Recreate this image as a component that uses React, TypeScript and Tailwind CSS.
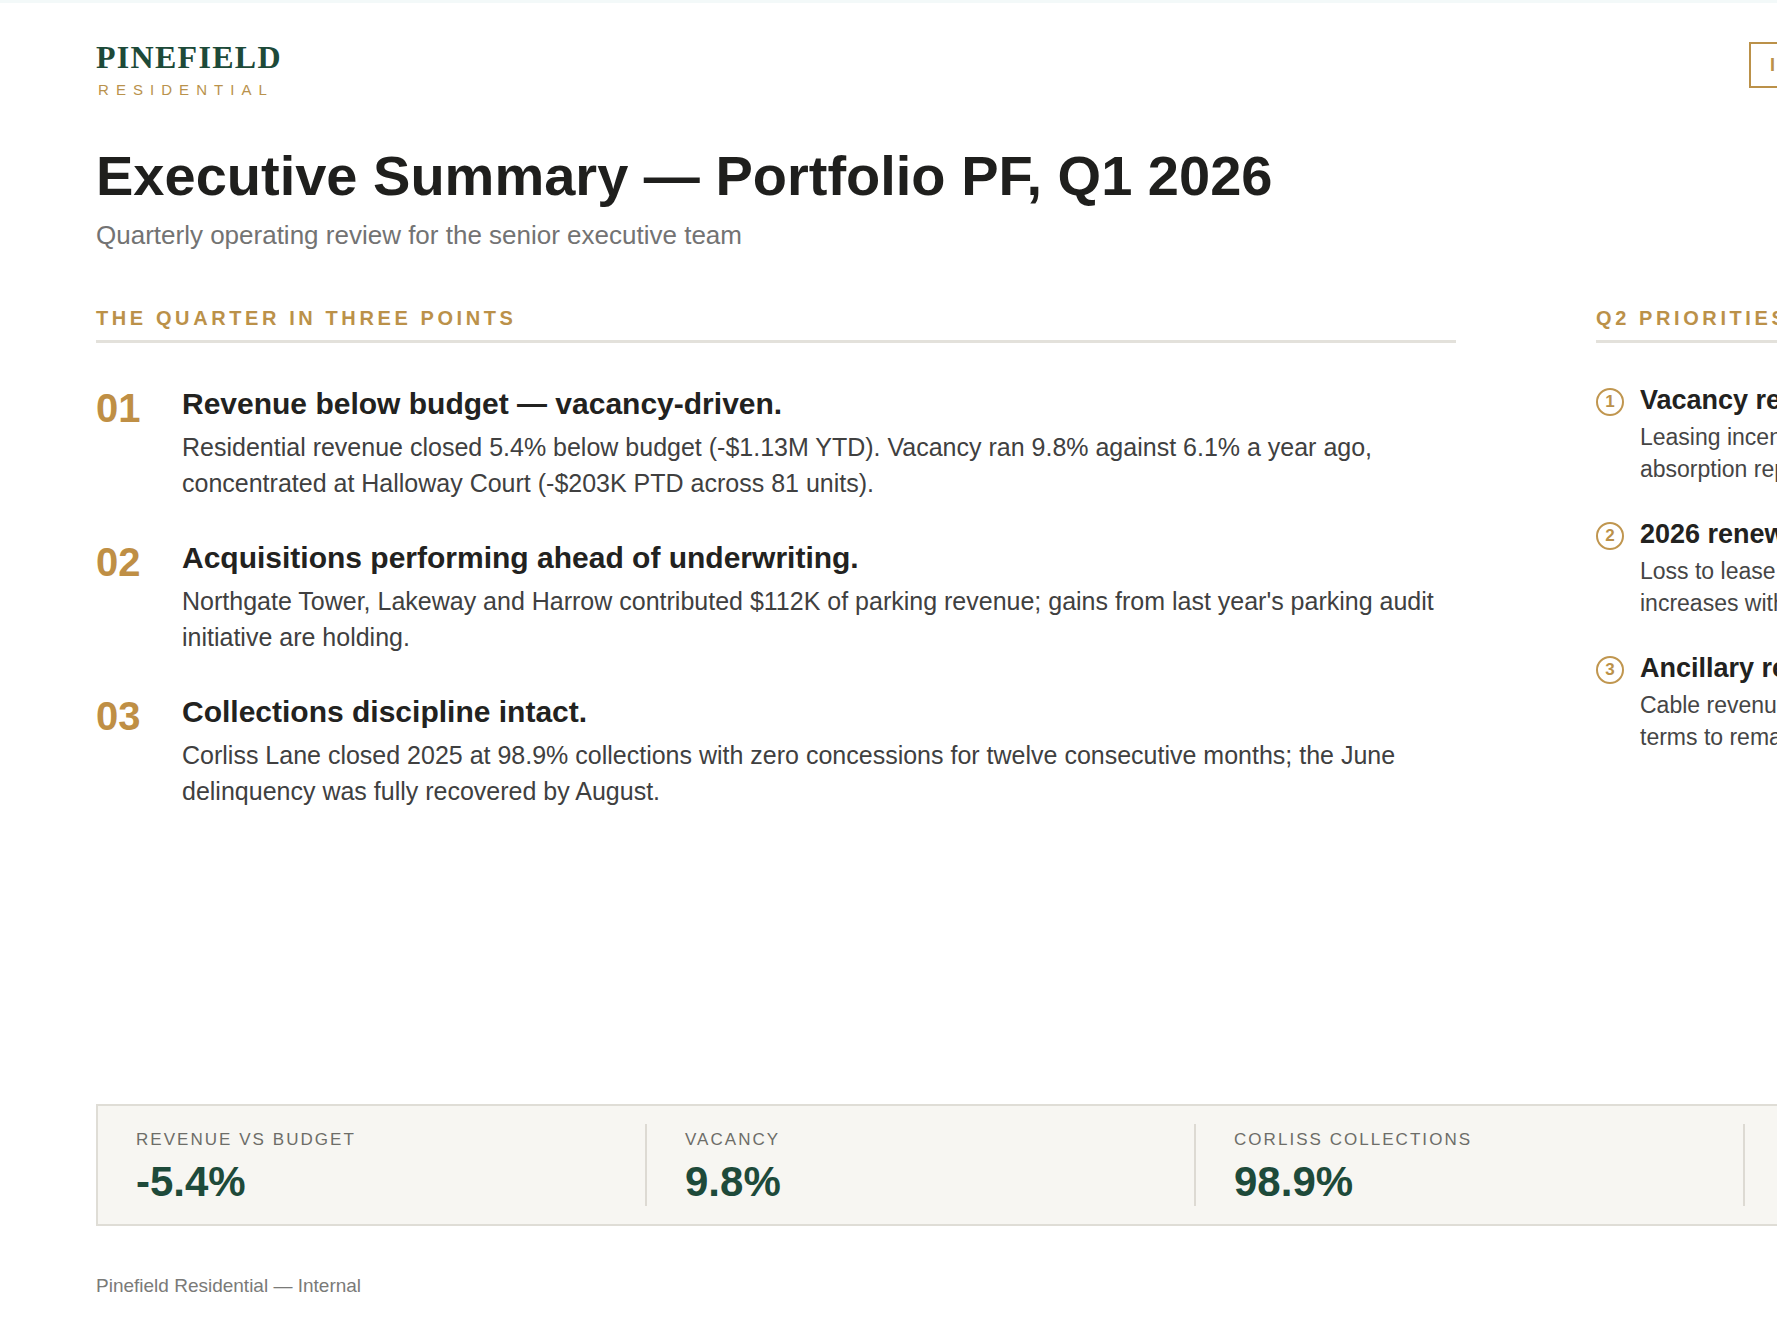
import React from 'react';

const POINTS = [
  {
    n: '01',
    title: 'Revenue below budget — vacancy-driven.',
    body: 'Residential revenue closed 5.4% below budget (-$1.13M YTD). Vacancy ran 9.8% against 6.1% a year ago, concentrated at Halloway Court (-$203K PTD across 81 units).',
  },
  {
    n: '02',
    title: 'Acquisitions performing ahead of underwriting.',
    body: "Northgate Tower, Lakeway and Harrow contributed $112K of parking revenue; gains from last year's parking audit initiative are holding.",
  },
  {
    n: '03',
    title: 'Collections discipline intact.',
    body: 'Corliss Lane closed 2025 at 98.9% collections with zero concessions for twelve consecutive months; the June delinquency was fully recovered by August.',
  },
];

const PRIORITIES = [
  {
    title: 'Vacancy recovery at Halloway Court.',
    body: 'Leasing incentives and targeted marketing at Halloway Court; absorption reported weekly to the executive team.',
  },
  {
    title: '2026 renewal pricing.',
    body: 'Loss to lease at Northgate Tower to be closed through renewal increases within the 4% guidance cap.',
  },
  {
    title: 'Ancillary revenue renegotiation.',
    body: 'Cable revenue share agreement expires in June; we expect terms to remain accretive.',
  },
];

const KPIS = [
  ['Revenue vs budget', '-5.4%'],
  ['Vacancy', '9.8%'],
  ['Corliss collections', '98.9%'],
  ['Parking revenue', '$112K'],
];

const SectionHeader = ({ children }: { children: React.ReactNode }) => (
  <h2 className="border-b-[3px] border-[#e3e1db] pb-[7px] text-[20px] font-bold uppercase leading-[30px] tracking-[0.18em] text-[#bb9149]">
    {children}
  </h2>
);

export default function App() {
  return (
    <div className="h-screen w-screen overflow-hidden bg-white font-['Liberation_Sans',Arial,sans-serif]">
      <div className="h-[3px] bg-[#f3f9f9]" />
      <div className="flex h-[1330px] w-[2392px] flex-col px-[96px] pb-[33px] pt-[38px]">
        {/* header */}
        <div className="flex items-start justify-between">
          <div>
            <div className="font-['Liberation_Serif',serif] text-[32px] font-bold leading-8 tracking-[0.04em] text-[#1d4a39]">
              PINEFIELD
            </div>
            <div className="mt-[9px] pl-[2px] text-[15px] leading-[15px] tracking-[0.47em] text-[#b9924c]">RESIDENTIAL</div>
          </div>
          <div className="mt-px flex h-[46px] w-[547px] items-center border-2 border-[#bb9149] px-[19px] text-[18px] font-bold tracking-[0.08em] text-[#bb9149]">
            INTERNAL — EXECUTIVE DISTRIBUTION
          </div>
        </div>

        <h1 className="mt-[47px] text-[56px] font-bold leading-[1.15] text-[#1f1f1d]">
          Executive Summary — Portfolio PF, Q1 2026
        </h1>
        <p className="mt-[9px] text-[26px] leading-[1.4] text-[#737373]">
          Quarterly operating review for the senior executive team
        </p>

        {/* main */}
        <div className="mt-[49px] grid grid-cols-[1360px_700px] gap-x-[140px]">
          <section>
            <SectionHeader>The quarter in three points</SectionHeader>
            <div className="mt-[43px] flex flex-col gap-[39px]">
              {POINTS.map(p => (
                <div key={p.n} className="flex">
                  <div className="mt-[2px] w-[86px] shrink-0 text-[40px] font-bold leading-[40px] text-[#bf8f45]">{p.n}</div>
                  <div>
                    <h3 className="text-[30px] font-bold leading-9 text-[#222220]">{p.title}</h3>
                    <p className="mt-[7px] text-[25px] leading-9 text-[#404040]">{p.body}</p>
                  </div>
                </div>
              ))}
            </div>
          </section>

          <section>
            <SectionHeader>Q2 priorities</SectionHeader>
            <div className="mt-[41px] flex flex-col gap-[33px]">
              {PRIORITIES.map((p, i) => (
                <div key={p.title} className="flex gap-[16px]">
                  <div className="mt-[4px] flex size-[28px] shrink-0 items-center justify-center rounded-full border-[2.5px] border-[#c0964f] text-[17px] font-bold leading-none text-[#bb9149]">
                    {i + 1}
                  </div>
                  <div>
                    <h3 className="text-[27px] font-bold leading-8 text-[#222220]">{p.title}</h3>
                    <p className="mt-[5px] text-[23px] leading-8 text-[#454545]">{p.body}</p>
                  </div>
                </div>
              ))}
            </div>
          </section>
        </div>

        <div className="flex-1" />

        {/* kpi strip */}
        <div className="grid grid-cols-4 border-2 border-[#dfddd6] bg-[#f7f6f2] py-[18px]">
          {KPIS.map(([label, value], i) => (
            <div key={label} className={`pb-[3px] pl-[38px] pt-[6px] ${i < 3 ? 'border-r-2 border-[#dddad3]' : ''}`}>
              <div className="text-[17px] uppercase leading-[1.2] tracking-[0.12em] text-[#6d6d68]">{label}</div>
              <div className="mt-[10px] text-[42px] font-bold leading-none text-[#1e4a3a]">{value}</div>
            </div>
          ))}
        </div>

        <footer className="mt-[46px] text-[19px] leading-[1.5] text-[#7a7a78]">Pinefield Residential — Internal</footer>
      </div>
    </div>
  );
}
